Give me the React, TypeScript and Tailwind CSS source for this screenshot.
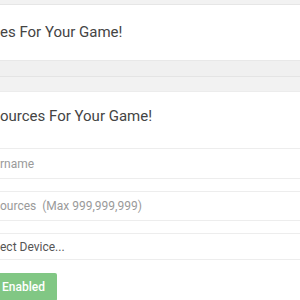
export default function App() {
  return (
    <div className="w-[300px] h-[300px] overflow-hidden bg-white font-['Roboto',sans-serif]">
      <div className="h-[5px] bg-[#f2f2f2] border-b border-[#e6e6e6]" />
      <div className="h-[55px] bg-white pt-[17px]">
        <h2 className="text-[15px] leading-[20px] text-[#444] whitespace-nowrap">es For Your Game!</h2>
      </div>
      <div className="h-[16px] bg-[#f0f0f0] border-t border-[#e8e8e8]" />
      <div className="h-[16px] bg-[#f2f2f2] border-t border-[#e4e4e4] border-b border-b-[#ececec]" />
      <div className="pt-[14px]">
        <h2 className="text-[15px] leading-[20px] text-[#444] whitespace-nowrap">ources For Your Game!</h2>
        <div className="mt-[22px] flex flex-col gap-[12px]">
          <div className="h-[31px] border-y border-[#ededed] flex items-center text-[12px] text-[#9a9a9a] whitespace-nowrap">rname</div>
          <div className="h-[30px] border-y border-[#ededed] flex items-center text-[12px] text-[#9a9a9a] whitespace-nowrap">ources&nbsp;&nbsp;(Max 999,999,999)</div>
          <div className="h-[27px] border-y border-[#ededed] flex items-center text-[12px] text-[#555] whitespace-nowrap">ect Device...</div>
        </div>
        <div className="mt-[13px] w-[57px] h-[28px] bg-[#81c784] rounded-r-[2px] flex items-center pl-[2px] text-[12px] font-medium text-white">Enabled</div>
      </div>
    </div>
  );
}
